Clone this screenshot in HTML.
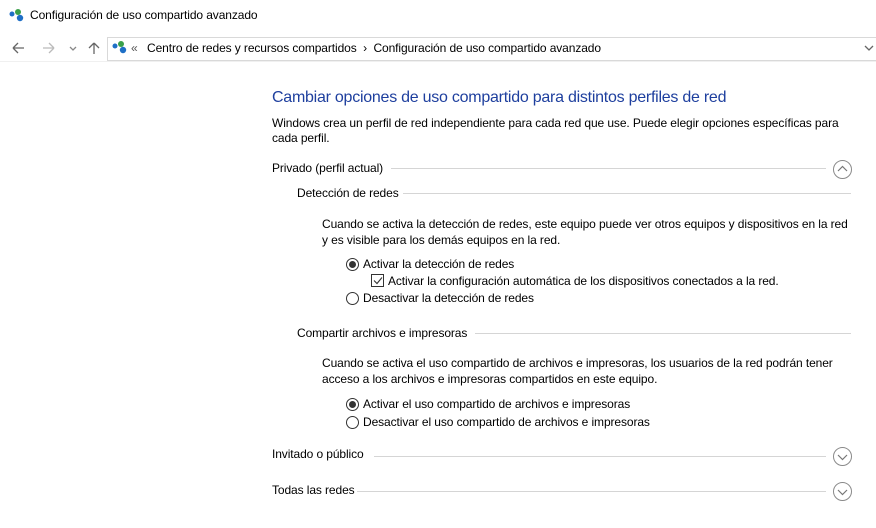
<!DOCTYPE html>
<html><head><style>
body{margin:0;width:876px;height:528px;background:#fff;font-family:"Liberation Sans",sans-serif;font-size:12px;color:#000;position:relative;overflow:hidden;letter-spacing:-0.1px}
.a{position:absolute;white-space:nowrap}
.line{position:absolute;height:1px;background:#d5d5d5}
.circ{position:absolute;width:17px;height:17px;border:1px solid #8a8a8a;border-radius:50%}
.radio{position:absolute;width:11px;height:11px;border:1px solid #333;border-radius:50%}
.radio.on::after{content:"";position:absolute;left:2px;top:2px;width:7px;height:7px;border-radius:50%;background:#333}
</style></head><body>
<svg class="a" style="left:9px;top:8px" width="16" height="14"><circle cx="3" cy="6" r="2.5" fill="#1e6fc6"/><circle cx="9" cy="4" r="3" fill="#3aa04a"/><circle cx="11" cy="10" r="3.2" fill="#1e6fc6"/></svg>
<div class="a" style="left:30px;top:8px;font-size:12px">Configuración de uso compartido avanzado</div>
<svg class="a" style="left:10px;top:40px" width="100" height="16" fill="none" stroke-width="1.3">
<path d="M3 8h11M3 8l5-5M3 8l5 5" stroke="#666"/>
<path d="M33 8h11M44 8l-5-5M44 8l-5 5" stroke="#bbb"/>
<path d="M60 7l3 3 3-3" stroke="#888"/>
<path d="M84 14V3M84 3l-5 5M84 3l5 5" stroke="#666"/>
</svg>
<div class="a" style="left:107px;top:37px;width:780px;height:22px;border:1px solid #d9d9d9"></div>
<svg class="a" style="left:112px;top:40px" width="16" height="14"><circle cx="3" cy="6" r="2.5" fill="#1e6fc6"/><circle cx="9" cy="4" r="3" fill="#3aa04a"/><circle cx="11" cy="10" r="3.2" fill="#1e6fc6"/></svg>
<div class="a" style="left:131px;top:41px;color:#555">«</div>
<div class="a" style="left:147px;top:41px">Centro de redes y recursos compartidos&nbsp;&nbsp;›&nbsp;&nbsp;Configuración de uso compartido avanzado</div>
<svg class="a" style="left:864px;top:44px" width="10" height="8"><path d="M1 2l4 4 4-4" stroke="#666" fill="none" stroke-width="1.3"/></svg>
<div class="a" style="left:0;top:61px;width:876px;height:1px;background:#f0f0f0"></div>

<div class="a" style="left:272px;top:89px;font-size:16px;color:#1e3f9e;letter-spacing:-0.25px">Cambiar opciones de uso compartido para distintos perfiles de red</div>
<div class="a" style="left:272px;top:116px;line-height:15px">Windows crea un perfil de red independiente para cada red que use. Puede elegir opciones específicas para<br>cada perfil.</div>

<div class="a" style="left:272px;top:161px">Privado (perfil actual)</div>
<div class="line" style="left:391px;top:168px;width:435px"></div>
<div class="circ" style="left:833px;top:160px"></div>
<svg class="a" style="left:837px;top:164px" width="11" height="11"><path d="M1 7l4.5-4.5L10 7" stroke="#777" fill="none" stroke-width="1.2"/></svg>

<div class="a" style="left:297px;top:186px">Detección de redes</div>
<div class="line" style="left:403px;top:193px;width:448px"></div>
<div class="a" style="left:322px;top:217px;line-height:15.5px">Cuando se activa la detección de redes, este equipo puede ver otros equipos y dispositivos en la red<br>y es visible para los demás equipos en la red.</div>
<div class="radio on" style="left:346px;top:258px"></div>
<div class="a" style="left:363px;top:257px">Activar la detección de redes</div>
<div class="a" style="left:371px;top:274px;width:11px;height:11px;border:1px solid #333"></div>
<svg class="a" style="left:372px;top:275px" width="11" height="11"><path d="M2 5.5l3 3 5-6" stroke="#333" fill="none" stroke-width="1.1"/></svg>
<div class="a" style="left:388px;top:274px">Activar la configuración automática de los dispositivos conectados a la red.</div>
<div class="radio" style="left:346px;top:292px"></div>
<div class="a" style="left:363px;top:291px">Desactivar la detección de redes</div>

<div class="a" style="left:297px;top:326px">Compartir archivos e impresoras</div>
<div class="line" style="left:475px;top:333px;width:376px"></div>
<div class="a" style="left:322px;top:356px;line-height:15.5px">Cuando se activa el uso compartido de archivos e impresoras, los usuarios de la red podrán tener<br>acceso a los archivos e impresoras compartidos en este equipo.</div>
<div class="radio on" style="left:346px;top:398px"></div>
<div class="a" style="left:363px;top:397px">Activar el uso compartido de archivos e impresoras</div>
<div class="radio" style="left:346px;top:416px"></div>
<div class="a" style="left:363px;top:415px">Desactivar el uso compartido de archivos e impresoras</div>

<div class="a" style="left:272px;top:447px">Invitado o público</div>
<div class="line" style="left:374px;top:456px;width:452px"></div>
<div class="circ" style="left:833px;top:447px"></div>
<svg class="a" style="left:837px;top:451px" width="11" height="11"><path d="M1 4l4.5 4.5L10 4" stroke="#777" fill="none" stroke-width="1.2"/></svg>

<div class="a" style="left:272px;top:483px">Todas las redes</div>
<div class="line" style="left:357px;top:491px;width:469px"></div>
<div class="circ" style="left:833px;top:482px"></div>
<svg class="a" style="left:837px;top:486px" width="11" height="11"><path d="M1 4l4.5 4.5L10 4" stroke="#777" fill="none" stroke-width="1.2"/></svg>
</body></html>
